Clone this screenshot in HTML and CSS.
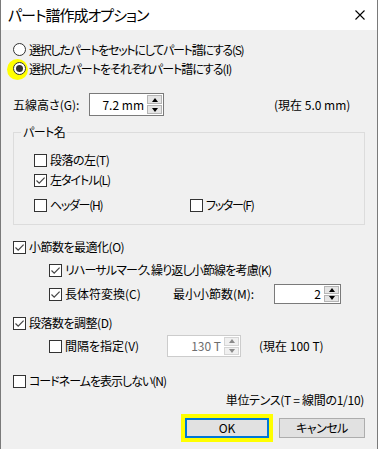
FILE: index.html
```html
<!DOCTYPE html>
<html lang="ja">
<head>
<meta charset="utf-8">
<link rel="stylesheet" href="styles.css">
</head>
<body>
<div class="window">
  <div class="titlebar">
    <span class="title">パート譜作成オプション</span>
    <svg class="close" width="10" height="10" viewBox="0 0 10 10"><path d="M0.5 0.5L9.5 9.5M9.5 0.5L0.5 9.5" stroke="#000" stroke-width="1.1" fill="none"/></svg>
  </div>
  <div class="content">
    <div class="row r-radio1"><span class="radio"></span><span class="txt ls125">選択したパートをセットにしてパート譜にする(S)</span></div>
    <div class="row r-radio2"><span class="radio checked hl"></span><span class="txt ls1">選択したパートをそれぞれパート譜にする(I)</span></div>

    <div class="row r-staff">
      <span class="lbl-staff">五線高さ(G):</span>
      <div class="spin spin-staff"><span class="val">7.2 mm</span><span class="spinbtns"><span class="sb up"></span><span class="sb down"></span></span></div>
      <span class="cur-staff">(現在 5.0 mm)</span>
    </div>

    <fieldset class="group">
      <legend>パート名</legend>
      <div class="group-inner">
        <div class="row g1"><span class="cb"></span><span class="txt ls05">段落の左(T)</span></div>
        <div class="row g2"><span class="cb checked"><svg viewBox="0 0 11 11"><path d="M1.5 5.5L4.2 8.2L9.6 2.6" stroke="#444" stroke-width="1.2" fill="none"/></svg></span><span class="txt ls1">左タイトル(L)</span></div>
        <div class="row g3"><span class="item-header"><span class="cb"></span><span class="txt ls13">ヘッダー(H)</span></span><span class="cb"></span><span class="txt ls13">フッター(F)</span></div>
      </div>
    </fieldset>

    <div class="row r-opt"><span class="cb checked"><svg viewBox="0 0 11 11"><path d="M1.5 5.5L4.2 8.2L9.6 2.6" stroke="#444" stroke-width="1.2" fill="none"/></svg></span><span class="txt ls05">小節数を最適化(O)</span></div>
    <div class="row r-reh indent"><span class="cb checked"><svg viewBox="0 0 11 11"><path d="M1.5 5.5L4.2 8.2L9.6 2.6" stroke="#444" stroke-width="1.2" fill="none"/></svg></span><span class="txt ls08">リハーサルマーク、繰り返し小節線を考慮(K)</span></div>
    <div class="row r-long indent">
      <span class="item-long"><span class="cb checked"><svg viewBox="0 0 11 11"><path d="M1.5 5.5L4.2 8.2L9.6 2.6" stroke="#444" stroke-width="1.2" fill="none"/></svg></span><span class="txt">長体符変換(C)</span></span>
      <span class="lbl-min">最小小節数(M):</span>
      <div class="spin spin-min"><span class="val">2</span><span class="spinbtns"><span class="sb up"></span><span class="sb down"></span></span></div>
    </div>
    <div class="row r-sys"><span class="cb checked"><svg viewBox="0 0 11 11"><path d="M1.5 5.5L4.2 8.2L9.6 2.6" stroke="#444" stroke-width="1.2" fill="none"/></svg></span><span class="txt ls05">段落数を調整(D)</span></div>
    <div class="row r-gap indent">
      <span class="item-gap"><span class="cb"></span><span class="txt">間隔を指定(V)</span></span>
      <div class="spin spin-gap disabled"><span class="val">130 T</span><span class="spinbtns"><span class="sb up"></span><span class="sb down"></span></span></div>
      <span class="cur-gap">(現在 100 T)</span>
    </div>
    <div class="row r-chord"><span class="cb"></span><span class="txt ls1">コードネームを表示しない(N)</span></div>
    <div class="row r-unit"><span class="ls03">単位テンス(T = 線間の1/10)</span></div>
    <div class="row r-buttons">
      <button class="btn btn-ok">OK</button>
      <button class="btn btn-cancel ls05">キャンセル</button>
    </div>
  </div>
</div>
</body>
</html>
```

FILE: styles.css
```css
html, body {
  margin: 0;
  padding: 0;
}
body {
  width: 378px;
  height: 449px;
  overflow: hidden;
  background: #f0f0f0;
  font-family: "Noto Sans CJK JP", "Noto Sans", sans-serif;
  font-size: 12px;
  font-feature-settings: "palt";
  color: #000;
}
.window {
  box-sizing: border-box;
  width: 378px;
  height: 449px;
  border-left: 1px solid #7a7a7a;
  border-right: 1px solid #7a7a7a;
  display: flex;
  flex-direction: column;
  background: #f0f0f0;
}
.titlebar {
  height: 30px;
  flex: none;
  background: #fff;
  display: flex;
  align-items: center;
  justify-content: space-between;
  padding: 0 12px 0 7px;
}
.title {
  font-size: 15px;
  line-height: 20px;
  letter-spacing: -1px;
}
.close {
  display: block;
}
.content {
  flex: 1;
  padding: 10px 12px 0 12px;
}
.row {
  display: flex;
  align-items: center;
  height: 19px;
  white-space: nowrap;
  line-height: 16px;
}
.txt {
  margin-left: 3px;
}
.ls03 { letter-spacing: -0.3px; }
.ls05 { letter-spacing: -0.5px; }
.ls08 { letter-spacing: -0.85px; }
.ls1 { letter-spacing: -1px; }
.ls125 { letter-spacing: -1.25px; }
.ls13 { letter-spacing: -1.3px; }

/* radios */
.radio {
  box-sizing: border-box;
  width: 13px;
  height: 13px;
  border: 1px solid #333;
  border-radius: 50%;
  background: #fff;
  flex: none;
  display: flex;
  align-items: center;
  justify-content: center;
}
.radio.checked::after {
  content: "";
  width: 7px;
  height: 7px;
  border-radius: 50%;
  background: #333;
}
.radio.hl {
  box-shadow: -2px 1px 0 4px #ffff00;
}

/* checkboxes */
.cb {
  box-sizing: border-box;
  width: 13px;
  height: 13px;
  border: 1px solid #333;
  background: #fff;
  flex: none;
  display: flex;
}
.cb svg {
  width: 11px;
  height: 11px;
  display: block;
}

/* staff row */
.r-staff {
  margin-top: 15px;
  height: 23px;
}
.lbl-staff {
  width: 76px;
}
.spin {
  box-sizing: border-box;
  display: flex;
  height: 23px;
  border: 1px solid #7a7a7a;
  background: #fff;
  flex: none;
}
.spin .val {
  flex: 1;
  text-align: right;
  padding-right: 3px;
  align-self: center;
}
.spinbtns {
  width: 15px;
  display: flex;
  flex-direction: column;
  gap: 1px;
  padding: 1px 1px 1px 0;
}
.sb {
  flex: 1;
  box-sizing: border-box;
  background: #e5e5e5;
  border: 1px solid #b5b5b5;
  display: flex;
  align-items: center;
  justify-content: center;
}
.sb.up::after {
  content: "";
  border-left: 3px solid transparent;
  border-right: 3px solid transparent;
  border-bottom: 4px solid #000;
}
.sb.down::after {
  content: "";
  border-left: 3px solid transparent;
  border-right: 3px solid transparent;
  border-top: 4px solid #000;
}
.spin-staff {
  width: 75px;
}
.cur-staff {
  margin-left: 110px;
}

/* group */
.group {
  margin: 8px 0 0 0;
  padding: 0;
  border: 1px solid #dcdcdc;
  min-width: 0;
}
.group legend {
  padding: 0 2px;
  margin-left: 7px;
  line-height: 16px;
  height: 16px;
  letter-spacing: -0.5px;
}
.group-inner {
  padding: 0 0 9px 20px;
}
.group .row {
  height: 20px;
}
.g1 {
  margin-top: 10px;
}
.g3 {
  margin-top: 5px;
}
.item-header {
  display: flex;
  align-items: center;
  width: 156px;
}

/* options */
.r-opt {
  margin-top: 12px;
  height: 20px;
}
.indent {
  padding-left: 36px;
}
.r-reh {
  margin-top: 3px;
  height: 20px;
}
.r-long {
  margin-top: 3px;
  height: 22px;
}
.item-long {
  display: flex;
  align-items: center;
  width: 124px;
}
.lbl-min {
  width: 101px;
}
.spin-min {
  width: 67px;
  height: 20px;
}
.r-sys {
  margin-top: 8px;
  height: 20px;
}
.r-gap {
  margin-top: 2px;
  height: 22px;
}
.item-gap {
  display: flex;
  align-items: center;
  width: 118px;
}
.spin-gap {
  width: 74px;
  height: 22px;
}
.spin.disabled {
  border-color: #cccccc;
  color: #6d6d6d;
}
.spin.disabled .sb {
  background: #f0f0f0;
  border-color: #d5d5d5;
}
.spin.disabled .sb::after {
  border-top-color: #8a8a8a;
  border-bottom-color: #8a8a8a;
}
.cur-gap {
  margin-left: 18px;
}
.r-chord {
  margin-top: 14px;
  height: 20px;
}
.r-unit {
  justify-content: flex-end;
  height: 18px;
  padding-right: 1px;
}
.r-buttons {
  margin-top: 9px;
  height: 20px;
  justify-content: flex-end;
  gap: 10px;
}
.btn {
  box-sizing: border-box;
  height: 20px;
  font-family: inherit;
  font-size: 12px;
  font-feature-settings: "palt";
  background: #e1e1e1;
  border: 1px solid #adadad;
  border-radius: 0;
  padding: 0;
  color: #000;
  line-height: 16px;
}
.btn-ok {
  width: 84px;
  border: 2px solid #0078d7;
  box-shadow: 0 0 0 4px #ffff00;
}
.btn-cancel {
  width: 86px;
}
```
